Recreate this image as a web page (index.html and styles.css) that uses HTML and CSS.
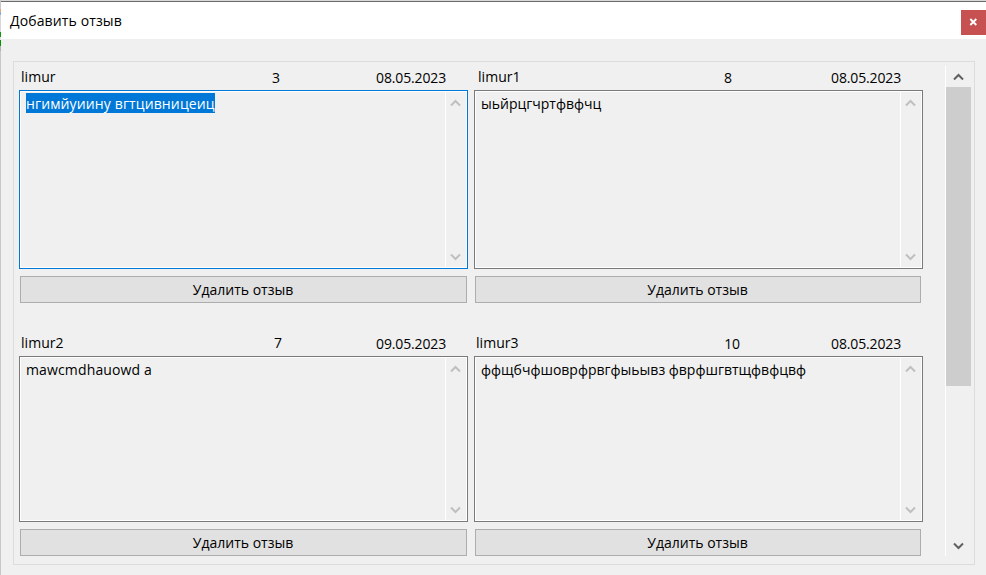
FILE: index.html
```html
<!DOCTYPE html>
<html lang="ru">
<head>
<meta charset="utf-8">
<title>Добавить отзыв</title>
<link rel="stylesheet" href="styles.css">
</head>
<body>
<div class="window">
  <header class="titlebar">
    <h1 class="title">Добавить отзыв</h1>
    <button class="close" aria-label="Закрыть"><svg width="9" height="8" viewBox="0 0 9 8"><path d="M1.3 1l6 6M7.3 1l-6 6"/></svg></button>
  </header>
  <main class="frame">
    <div class="reviews">
      <article class="card">
        <div class="meta"><span class="name">limur</span><span class="rating">3</span><span class="date">08.05.2023</span></div>
        <div class="box focused">
          <p class="text"><span class="selected">нгимйуиину вгтцивницеиц</span></p>
          <div class="bar"><svg class="arrow" viewBox="0 0 11 8"><path d="M1 6.5L5.5 2L10 6.5"/></svg><svg class="arrow" viewBox="0 0 11 8"><path d="M1 1.5L5.5 6L10 1.5"/></svg></div>
        </div>
        <button class="delete">Удалить отзыв</button>
      </article>
      <article class="card right">
        <div class="meta m2"><span class="name">limur1</span><span class="rating">8</span><span class="date">08.05.2023</span></div>
        <div class="box">
          <p class="text">ыьйрцгчртфвфчц</p>
          <div class="bar"><svg class="arrow" viewBox="0 0 11 8"><path d="M1 6.5L5.5 2L10 6.5"/></svg><svg class="arrow" viewBox="0 0 11 8"><path d="M1 1.5L5.5 6L10 1.5"/></svg></div>
        </div>
        <button class="delete">Удалить отзыв</button>
      </article>
      <article class="card">
        <div class="meta m3"><span class="name">limur2</span><span class="rating">7</span><span class="date">09.05.2023</span></div>
        <div class="box">
          <p class="text loose">mawcmdhauowd a</p>
          <div class="bar"><svg class="arrow" viewBox="0 0 11 8"><path d="M1 6.5L5.5 2L10 6.5"/></svg><svg class="arrow" viewBox="0 0 11 8"><path d="M1 1.5L5.5 6L10 1.5"/></svg></div>
        </div>
        <button class="delete">Удалить отзыв</button>
      </article>
      <article class="card right">
        <div class="meta m4"><span class="name">limur3</span><span class="rating">10</span><span class="date">08.05.2023</span></div>
        <div class="box">
          <p class="text">ффщбчфшоврфрвгфыьывз фврфшгвтщфвфцвф</p>
          <div class="bar"><svg class="arrow" viewBox="0 0 11 8"><path d="M1 6.5L5.5 2L10 6.5"/></svg><svg class="arrow" viewBox="0 0 11 8"><path d="M1 1.5L5.5 6L10 1.5"/></svg></div>
        </div>
        <button class="delete">Удалить отзыв</button>
      </article>
    </div>
    <div class="scrollbar">
      <svg class="arrow dark" viewBox="0 0 11 8"><path d="M1 6.5L5.5 2L10 6.5"/></svg>
      <div class="thumb"></div>
      <svg class="arrow dark" viewBox="0 0 11 8"><path d="M1 1.5L5.5 6L10 1.5"/></svg>
    </div>
  </main>
</div>
</body>
</html>
```
FILE: styles.css
```css
* { box-sizing: border-box; }

body {
  margin: 0;
  width: 986px;
  height: 575px;
  overflow: hidden;
  padding-left: 1px;
  background: linear-gradient(#c8c8c8 9px, #e3a878 9px 12px, #8aa6d8 12px 15px, #d8d8d8 15px 32px, #0a9a0a 32px 37px, #e4e4e4 37px 40px, #009400 40px 46px, #b0b0b0 46px 51px, #c8c8c8 51px);
  font: 14px/20px "Open Sans", "Noto Sans", sans-serif;
  color: #000;
}

button { font: inherit; color: inherit; padding: 0; }

.window {
  height: 575px;
  background: #f0f0f0;
  border-top: 1px solid #d9d9d9;
}

.titlebar {
  display: flex;
  justify-content: space-between;
  height: 38px;
  border-top: 1px solid #6b6b6b;
  background: #fff;
}

.title {
  margin: 9px 0 0 9px;
  font-size: 14px;
  font-weight: 400;
  line-height: 20px;
  letter-spacing: 0.13px;
}

.close {
  display: flex;
  align-items: center;
  justify-content: center;
  width: 25px;
  height: 25px;
  margin-top: 8px;
  padding-bottom: 1px;
  border: 0;
  background: #c75050;
}

.close path { fill: none; stroke: #fff; stroke-width: 1.9; }

.frame {
  display: flex;
  width: 962px;
  height: 504px;
  margin: 22px 0 0 12px;
  padding: 4px 3px 0 5px;
  border: 1px solid #dcdcdc;
}

.reviews {
  display: grid;
  grid-template-columns: 449px 449px;
  grid-template-rows: 237px 224px;
  gap: 29px 6px;
}

.card { display: flex; flex-direction: column; }

.meta {
  display: grid;
  grid-template-columns: 225px 60px 1fr;
  height: 24px;
  padding: 1px 22px 0 2px;
  letter-spacing: -0.15px;
}

.m2 { grid-template-columns: 220px 60px 1fr; padding-left: 4px; }
.m3 { grid-template-columns: 227px 60px 1fr; }
.m4 { grid-template-columns: 226px 60px 1fr; }
.name { letter-spacing: 0.05px; }
.rating { text-align: center; padding-top: 1px; }
.m3 .rating { padding-top: 0; }
.date { text-align: right; padding-top: 1px; }

.box {
  flex: 1;
  display: flex;
  justify-content: space-between;
  border: 1px solid #7a7a7a;
  box-shadow: inset 0 0 0 1px #fff;
  padding: 1px;
}

.focused { border-color: #0078d7; }

.text { margin: 2px 0 0 5px; white-space: nowrap; }

.loose { letter-spacing: 0.14px; }

.selected {
  display: inline-block;
  height: 20px;
  margin-top: -1px;
  line-height: 22px;
  background: #0078d7;
  color: #fff;
  letter-spacing: 0.13px;
}

.bar {
  display: flex;
  flex-direction: column;
  justify-content: space-between;
  align-items: center;
  width: 21px;
  padding: 7px 2px 6px 0;
  border-left: 1px solid #fff;
}

.arrow { width: 11px; height: 8px; flex: none; }
.arrow path { fill: none; stroke: #bfbfbf; stroke-width: 2; }
.dark path { stroke: #606060; }

.delete {
  height: 27px;
  margin: 7px 1px 0;
  padding-right: 1px;
  border: 1px solid #adadad;
  background: #e1e1e1;
  line-height: 20px;
}

.right .delete { margin-right: 2px; }

.scrollbar {
  display: flex;
  flex-direction: column;
  align-items: center;
  width: 26px;
  height: 490px;
  margin-left: 22px;
  padding: 7px 0 6px;
  border-left: 1px solid #fff;
}

.thumb { width: 25px; height: 299px; margin: 6px 0 auto; background: #cdcdcd; }
```
